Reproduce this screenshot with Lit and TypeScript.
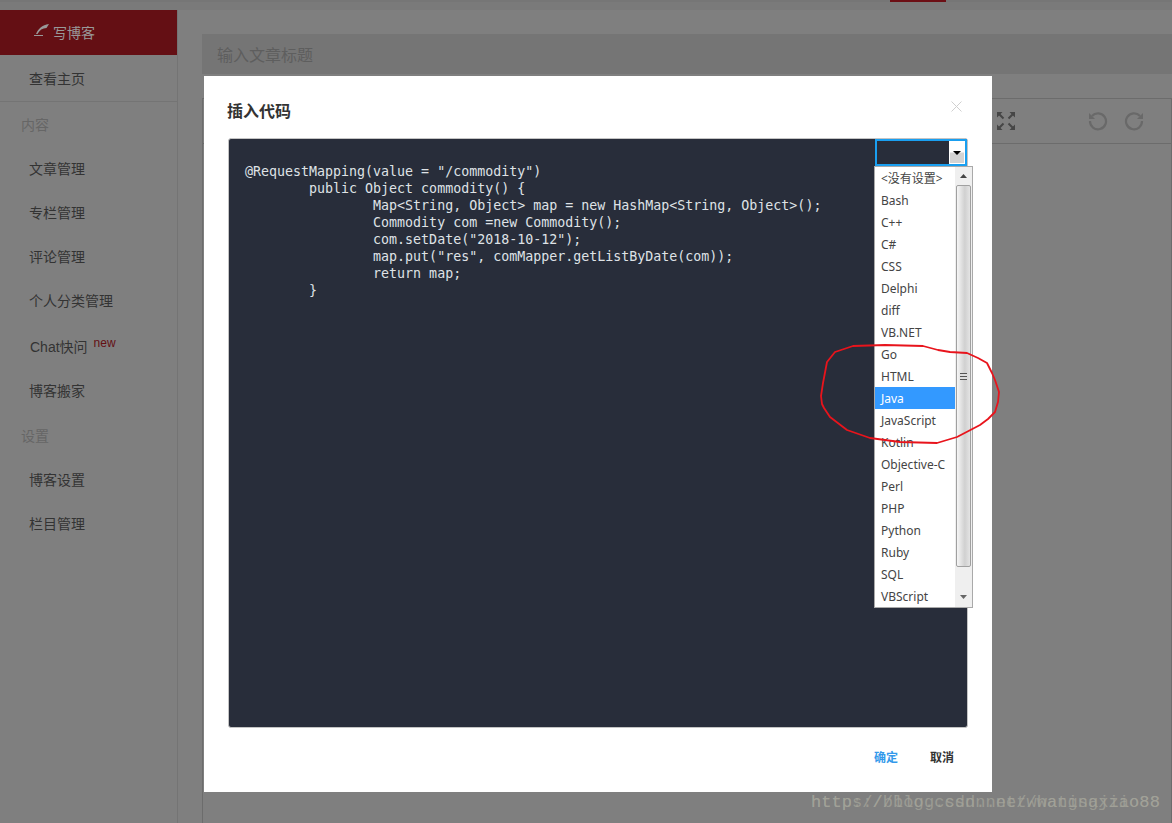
import { LitElement, html, css, svg } from "lit";
import { customElement } from "lit/decorators.js";

const LANGS = ["<没有设置>","Bash","C++","C#","CSS","Delphi","diff","VB.NET","Go","HTML","Java","JavaScript","Kotlin","Objective-C","Perl","PHP","Python","Ruby","SQL","VBScript"];
const CODE = `@RequestMapping(value = "/commodity")
        public Object commodity() {
                Map<String, Object> map = new HashMap<String, Object>();
                Commodity com =new Commodity();
                com.setDate("2018-10-12");
                map.put("res", comMapper.getListByDate(com));
                return map;
        }`;

@customElement("app-root")
export class AppRoot extends LitElement {
  static styles = css`
    :host { display: block; width: 1172px; height: 823px; overflow: hidden; font-family: "Liberation Sans", "Noto Sans CJK SC", sans-serif; }
    * { box-sizing: border-box; }
    .page { position: relative; width: 1172px; height: 823px; background: #7f7f7f; overflow: hidden; }
    .top { height: 10px; background: #7a7a7a; border-top: 2px solid #767676; display: flex; }
    .top i { display: block; width: 56px; height: 2px; margin: -2px 0 0 890px; background: #6c0f15; }
    .body { display: flex; height: 813px; }
    .side { width: 178px; border-right: 1px solid #747474; color: #333; font-size: 14px; flex: none; }
    .write { height: 45px; background: #640f14; color: #999; display: flex; align-items: center; padding: 0 0 2px 34px; gap: 4px; }
    .write svg { display: block; margin-top: -3px; }
    .home { height: 47px; padding-left: 29px; border-bottom: 1px solid #747474; display: flex; align-items: center; }
    .group { height: 44px; padding-left: 21px; display: flex; align-items: center; color: #666; }
    .group.g2 { height: 45px; }
    .item { height: 44px; padding-left: 29px; display: flex; align-items: center; }
    .item sup { color: #640f14; font-size: 12px; margin: -6px 0 0 6px; line-height: 14px; }
    .item.chat { padding: 3px 0 0 30px; height: 45px; }
    .item.blog { height: 45px; }
    .main { flex: 1; padding-top: 24px; display: flex; flex-direction: column; margin-left: 24px; }
    .title { height: 40px; background: #757575; color: #5e5e5e; font-size: 16px; display: flex; align-items: center; padding-left: 15px; flex: none; }
    .gap { height: 24px; flex: none; }
    .editor { flex: 1; border-left: 1px solid #6c6c6c; border-right: 1px solid #6c6c6c; }
    .toolbar { height: 46px; border-top: 1px solid #6c6c6c; border-bottom: 1px solid #6c6c6c; display: flex; align-items: center; justify-content: flex-end; padding-right: 27px; gap: 16px; }
    .toolbar svg { display: block; }
    .toolbar .fs { margin-right: 57px; }
    .dialog { position: absolute; left: 204px; top: 76px; width: 788px; height: 716px; background: #fff; display: flex; flex-direction: column; padding: 0 24px; }
    .head { height: 62px; display: flex; align-items: center; justify-content: space-between; padding: 8px 6px 0 0; }
    .head h2 { margin: 2px 0 0 -1px; font-size: 16px; font-weight: 700; color: #333; line-height: 22px; }
    .close { display: block; margin: -10px 0 0 0; }
    .codebox { position: relative; width: 740px; height: 590px; background: #282d3a; border: 1px solid #c4c4c4; border-radius: 3px; padding: 24px 16px 0; }
    pre { margin: 0; color: #dfe2e6; font-family: "DejaVu Sans Mono", monospace; font-size: 13.3px; line-height: 17px; }
    .select { position: absolute; right: 0; top: 0; width: 92px; height: 27px; border: 2px solid #1a9ff0; background: #282d3a; display: flex; justify-content: flex-end; }
    .select .btn { width: 16px; height: 23px; background: linear-gradient(#fff 45%, #d3d3d3 55%); border: 1px solid #fff; display: flex; align-items: center; justify-content: center; }
    .list { position: absolute; left: 645px; top: 27px; width: 99px; height: 442px; background: #fff; border: 1px solid #a9a9a9; display: flex; color: #444; font-family: "Noto Sans", "Noto Sans CJK SC", sans-serif; font-size: 12px; z-index: 2; }
    .opts { flex: 1; }
    .opt { height: 22px; line-height: 22px; padding: 1px 0 0 6px; white-space: nowrap; }
    .opt.on { background: #3399ff; color: #fff; }
    .bar { width: 17px; background: #efefef; display: flex; flex-direction: column; align-items: center; }
    .bar .up, .bar .down { height: 18px; width: 17px; flex: none; display: flex; align-items: center; justify-content: center; }
    .bar .down { height: 20px; margin-top: auto; }
    .thumb { width: 15px; height: 382px; flex: none; border: 1px solid #a0a0a0; border-radius: 2px; background: linear-gradient(90deg, #f6f6f6, #d0d0d0 60%, #e4e4e4); display: flex; align-items: center; justify-content: center; }
    .thumb span { display: block; width: 7px; height: 7px; background: repeating-linear-gradient(#555 0 1px, #ddd 1px 3px); }
    .foot { flex: 1; display: flex; justify-content: flex-end; align-items: center; gap: 32px; padding: 0 14px 8px 0; font-size: 12px; font-weight: 700; color: #333; }
    .foot .ok { color: #3399ea; }
    .mark { position: absolute; left: 811px; top: 793px; font-family: "Liberation Mono", monospace; font-size: 17px; letter-spacing: .06px; line-height: 20px; color: #a4a49a; white-space: nowrap; opacity: .75; }
    .circle { position: absolute; left: 818px; top: 340px; z-index: 3; pointer-events: none; }
  `;

  render() {
    return html`<div class="page">
      <div class="top"><i></i></div>
      <div class="body">
        <nav class="side">
          <div class="write">
            <svg width="15" height="12" viewBox="0 0 15 12"><path d="M2 10 C4 5 8 1 15 0 L12.5 4 C8.5 4 5.5 6 3.5 10 Z" fill="#999"/><rect x="0" y="11" width="9" height="1" fill="#999"/></svg>
            <span>写博客</span>
          </div>
          <div class="home">查看主页</div>
          <div class="group">内容</div>
          <div class="item">文章管理</div>
          <div class="item">专栏管理</div>
          <div class="item">评论管理</div>
          <div class="item">个人分类管理</div>
          <div class="item chat">Chat快问<sup>new</sup></div>
          <div class="item blog">博客搬家</div>
          <div class="group g2">设置</div>
          <div class="item">博客设置</div>
          <div class="item">栏目管理</div>
        </nav>
        <div class="main">
          <div class="title">输入文章标题</div>
          <div class="gap"></div>
          <div class="editor">
            <div class="toolbar">
              <svg class="fs" width="18" height="18" viewBox="0 0 18 18" fill="#464646" stroke="#464646" stroke-width="0">
                <path d="M0 0h5.5L0 5.5zM18 0v5.5L12.5 0zM0 18v-5.5L5.5 18zM18 18h-5.5L18 12.5z"/>
                <path d="M2 2l4.5 4.5M16 2l-4.5 4.5M2 16l4.5-4.5M16 16l-4.5-4.5" fill="none" stroke-width="2"/>
              </svg>
              <svg width="20" height="20" viewBox="0 0 20 20" fill="none" stroke="#696969" stroke-width="2.2"><path d="M4 5a8 8 0 1 1-2 5"/><path d="M1 2v6h6z" fill="#696969" stroke="none"/></svg>
              <svg width="20" height="20" viewBox="0 0 20 20" fill="none" stroke="#696969" stroke-width="2.2"><path d="M16 5a8 8 0 1 0 2 5"/><path d="M19 2v6h-6z" fill="#696969" stroke="none"/></svg>
            </div>
          </div>
        </div>
      </div>

      <div class="dialog">
        <div class="head">
          <h2>插入代码</h2>
          <svg class="close" width="11" height="11" viewBox="0 0 11 11" stroke="#d0d0d0" stroke-width="1" fill="none"><path d="M.5.5l10 10M10.5.5l-10 10"/></svg>
        </div>
        <div class="codebox">
          <pre>${CODE}</pre>
          <div class="select"><div class="btn"><svg width="8" height="4" viewBox="0 0 8 4"><path d="M0 0h8L4 4z" fill="#000"/></svg></div></div>
          <div class="list">
            <div class="opts">${LANGS.map((l) => html`<div class="opt ${l === "Java" ? "on" : ""}">${l}</div>`)}</div>
            <div class="bar">
              <div class="up"><svg width="7" height="4" viewBox="0 0 7 4"><path d="M0 4h7L3.5 0z" fill="#444"/></svg></div>
              <div class="thumb"><span></span></div>
              <div class="down"><svg width="7" height="4" viewBox="0 0 7 4"><path d="M0 0h7L3.5 4z" fill="#666"/></svg></div>
            </div>
          </div>
        </div>
        <div class="foot"><span class="ok">确定</span><span>取消</span></div>
      </div>

      <svg class="circle" width="186" height="108" viewBox="818 340 186 108" fill="none" stroke="#e8141c" stroke-width="1.8" stroke-linejoin="round">
        ${svg`<path d="M822 404 L821 396 L823 383 L827 362 L835 352 L853 346 L885 345 L923 346 L938 350 L950 352 L967 353 L978 358 L987 363 L992 373 L995 380 L999 392 L998 402 L995 412 L988 419 L980 425 L957 437 L937 443 L900 442 L870 438 L847 430 L830 417 L824 408 Z"/>`}
      </svg>

      <div class="mark">https://blog.csdn.net/wangsajzio88</div>
      <div class="mark">http://blog.csdn.net/whatingxiao88</div>
    </div>`;
  }
}
